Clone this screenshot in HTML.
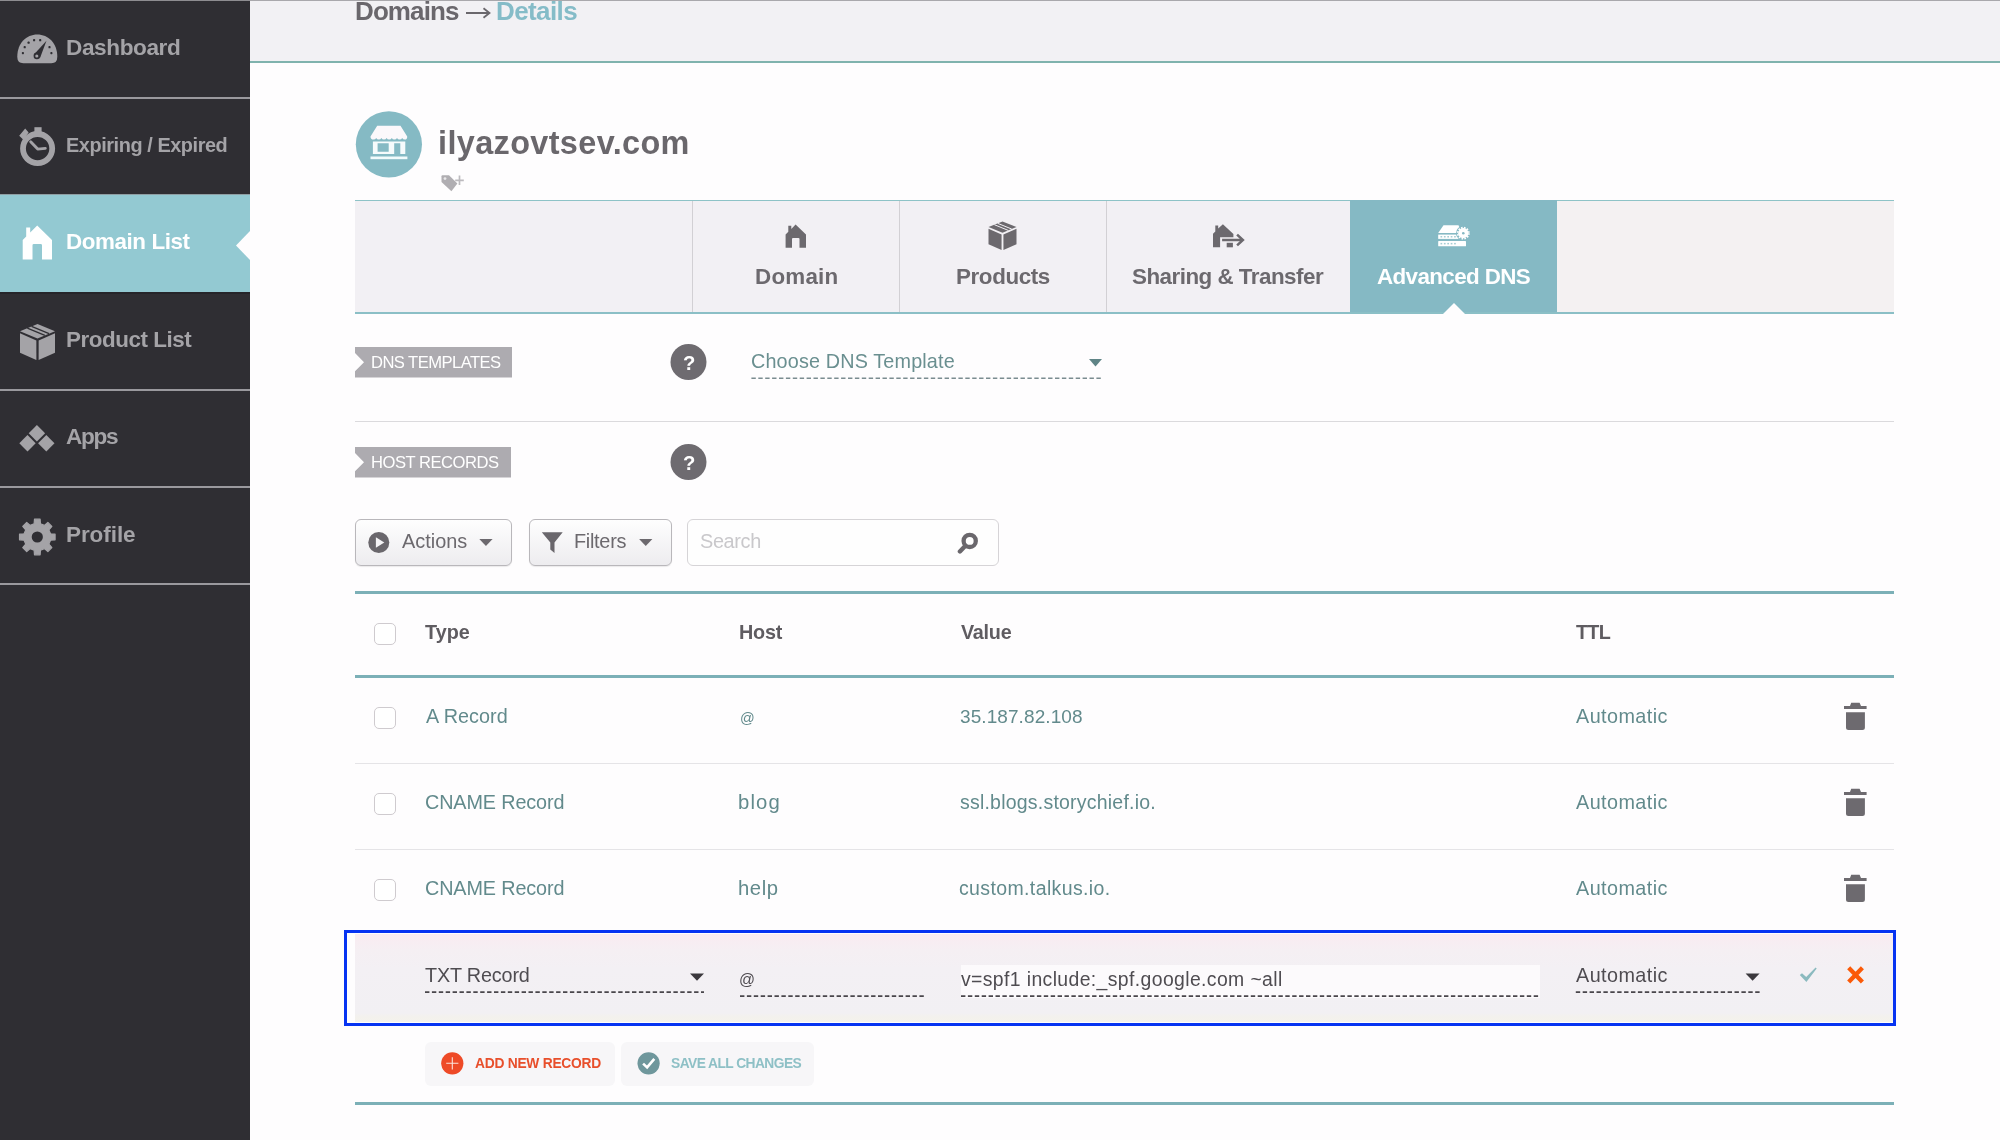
<!DOCTYPE html>
<html><head><meta charset="utf-8"><title>Advanced DNS</title>
<style>
html,body{margin:0;padding:0}
body{width:2000px;height:1140px;position:relative;overflow:hidden;background:#fefdfe;font-family:"Liberation Sans",sans-serif}
.t{position:absolute;white-space:nowrap;line-height:0;height:40px;font-family:"Liberation Sans",sans-serif;will-change:transform}
.t i{display:inline-block;width:0;height:40px}
.r{position:absolute;display:block}
.g{position:absolute;left:0;top:0;width:0;height:0}
</style></head><body>

<header class="g">
<div class="r" style="left:250px;top:0px;width:1750px;height:62px;background:#f2f1f4;"></div>
<div class="r" style="left:0px;top:0px;width:2000px;height:1.2px;background:#a9a8ac;"></div>
<div class="r" style="left:250px;top:61.2px;width:1750px;height:2.3px;background:#80b3ae;"></div>
<div class="t" style="left:354.71px;top:-19.60px;font-size:26px;color:#6a676c;font-weight:700;letter-spacing:-0.898px;"><i></i>Domains</div>
<div class="t" style="left:496.31px;top:-19.60px;font-size:26px;color:#85bcc8;font-weight:700;letter-spacing:-0.592px;"><i></i>Details</div>
<svg class="r" style="left:465px;top:6px" width="27" height="14" viewBox="0 0 27 14"><path d="M1 7H24M18.5 2.2L24.5 7L18.5 11.8" fill="none" stroke="#6a676c" stroke-width="1.8"/></svg>
</header><nav class="g">
<div class="r" style="left:0px;top:0px;width:250px;height:1140px;background:#2f2e33;"></div>
<div class="r" style="left:0px;top:0px;width:250px;height:1.2px;background:#8e8d91;"></div>
<div class="r" style="left:0px;top:97px;width:250px;height:1.6px;background:#9a999e;"></div>
<div class="r" style="left:0px;top:389px;width:250px;height:1.6px;background:#9a999e;"></div>
<div class="r" style="left:0px;top:486px;width:250px;height:1.6px;background:#9a999e;"></div>
<div class="r" style="left:0px;top:583px;width:250px;height:1.6px;background:#9a999e;"></div>
<div class="r" style="left:0px;top:194.7px;width:250px;height:97.8px;background:#93c9d2;"></div>
<div class="r" style="left:0px;top:194px;width:250px;height:1px;background:#8f9ea3;"></div>
<div class="r" style="left:0px;top:292px;width:250px;height:1.5px;background:#26252a;"></div>
<svg class="r" style="left:236px;top:231px" width="14" height="29" viewBox="0 0 14 29"><path d="M14 0L0 14.5L14 29Z" fill="#fefdfe"/></svg>
<div class="t" style="left:66.03px;top:15.30px;font-size:22.6px;color:#a4a3a7;font-weight:700;letter-spacing:-0.404px;"><i></i>Dashboard</div>
<div class="t" style="left:66.21px;top:112.30px;font-size:19.9px;color:#a4a3a7;font-weight:700;letter-spacing:-0.433px;"><i></i>Expiring / Expired</div>
<div class="t" style="left:66.04px;top:209.30px;font-size:22.4px;color:#ffffff;font-weight:700;letter-spacing:-0.415px;"><i></i>Domain List</div>
<div class="t" style="left:66.04px;top:307.00px;font-size:22.4px;color:#a4a3a7;font-weight:700;letter-spacing:-0.437px;"><i></i>Product List</div>
<div class="t" style="left:65.73px;top:404.40px;font-size:22.6px;color:#a4a3a7;font-weight:700;letter-spacing:-1.310px;"><i></i>Apps</div>
<div class="t" style="left:66.04px;top:501.50px;font-size:22.5px;color:#a4a3a7;font-weight:700;letter-spacing:-0.073px;"><i></i>Profile</div>
<svg class="r" style="left:17px;top:34px" width="41" height="30" viewBox="0 0 41 30"><g transform="translate(0.3 0.3)"><path d="M6 29Q0 29 0 22.5C0 9 9 0.3 20 0.3C31 0.3 40 9 40 22.5Q40 29 34 29Z" fill="#a4a3a7"/><rect x="4.55" y="17.65" width="2.1" height="2.3" rx="0.7" fill="#2f2e33"/><rect x="6.35" y="11.75" width="2.1" height="2.3" rx="0.7" fill="#2f2e33"/><rect x="10.25" y="7.25" width="2.1" height="2.3" rx="0.7" fill="#2f2e33"/><rect x="15.75" y="4.75" width="2.1" height="2.3" rx="0.7" fill="#2f2e33"/><rect x="21.85" y="4.75" width="2.1" height="2.3" rx="0.7" fill="#2f2e33"/><rect x="31.15" y="11.75" width="2.1" height="2.3" rx="0.7" fill="#2f2e33"/><rect x="33.05" y="17.65" width="2.1" height="2.3" rx="0.7" fill="#2f2e33"/><path d="M29.2 6.4L22.9 23.2L16.9 19.9Z" fill="#2f2e33"/><circle cx="19.6" cy="21.6" r="3.3" fill="#2f2e33"/><circle cx="19.5" cy="21.7" r="1.55" fill="#a4a3a7"/></g></svg>
<svg class="r" style="left:18px;top:126px" width="40" height="41" viewBox="0 0 40 41"><circle cx="19.6" cy="22.6" r="14.6" fill="none" stroke="#a4a3a7" stroke-width="5.8"/><rect x="16.4" y="1.2" width="7.2" height="5.5" fill="#a4a3a7"/><path d="M1.2 9.8L7.2 2.6L10.6 6.6L8.4 9.6L10.4 12L7.2 15.4Z" fill="#a4a3a7"/><path d="M12.7 15.8L19.7 23.1L27.3 22.4" fill="none" stroke="#a4a3a7" stroke-width="2.9" stroke-linecap="round" stroke-linejoin="round"/></svg>
<svg class="r" style="left:22px;top:225px" width="31" height="35" viewBox="0 0 31 35"><path d="M0.7 34.6V15L4.2 11.5V2.5H8.2V7.5L15.2 0.5L30 15V34.6H20V20.3Q20 19 18.7 19H11.8Q10.5 19 10.5 20.3V34.6Z" fill="#ffffff"/></svg>
<svg class="r" style="left:20px;top:324px" width="35" height="36" viewBox="0 0 35 36"><path d="M17.5 0L35 7.2L17.5 14.4L0 7.2Z" fill="#a4a3a7"/><path d="M0 9.36L16.345 16.560000000000002V36L0 28.8Z" fill="#a4a3a7"/><path d="M35 9.36L18.655 16.560000000000002V36L35 28.8Z" fill="#a4a3a7"/><path d="M7.35 4.176L24.849999999999998 11.376000000000001M11.55 2.4480000000000004L29.049999999999997 9.648000000000001" stroke="#2f2e33" stroke-width="1.26" fill="none"/></svg>
<svg class="r" style="left:19px;top:425px" width="36" height="27" viewBox="0 0 36 27"><path d="M17.9 0.0L26.099999999999998 8.2L17.9 16.4L9.7 8.2Z" fill="#a4a3a7"/><path d="M8.5 10.100000000000001L16.7 18.3L8.5 26.5L0.3000000000000007 18.3Z" fill="#a4a3a7"/><path d="M27.3 10.100000000000001L35.5 18.3L27.3 26.5L19.1 18.3Z" fill="#a4a3a7"/></svg>
<svg class="r" style="left:18px;top:518px" width="39" height="39" viewBox="0 0 39 39"><path d="M16.13 5.78L16.48 1.22L22.12 1.22L22.47 5.78L26.41 7.40L29.88 4.44L33.86 8.42L30.90 11.89L32.52 15.83L37.08 16.18L37.08 21.82L32.52 22.17L30.90 26.11L33.86 29.58L29.88 33.56L26.41 30.60L22.47 32.22L22.12 36.78L16.48 36.78L16.13 32.22L12.19 30.60L8.72 33.56L4.74 29.58L7.70 26.11L6.08 22.17L1.52 21.82L1.52 16.18L6.08 15.83L7.70 11.89L4.74 8.42L8.72 4.44L12.19 7.40Z" fill="#a4a3a7" stroke="#a4a3a7" stroke-width="1.2" stroke-linejoin="round"/><circle cx="19.3" cy="19" r="5.6" fill="#2f2e33"/></svg>
</nav><main class="g"><section class="g">
<svg class="r" style="left:355px;top:110px" width="68" height="68" viewBox="0 0 68 68"><g transform="translate(0.4 0.8)"><circle cx="33.5" cy="33.5" r="33.1" fill="#85bac4"/><path d="M21.8 14.9H45.1L51.8 25.6Q52 28.7 49.4 28.7Q47.6 28.7 46.8 27.2Q46 28.7 44.2 28.7Q42.4 28.7 41.6 27.2Q40.8 28.7 39 28.7Q37.2 28.7 36.4 27.2Q35.6 28.7 33.8 28.7Q32 28.7 31.2 27.2Q30.4 28.7 28.6 28.7Q26.8 28.7 26 27.2Q25.2 28.7 23.4 28.7Q21.6 28.7 20.8 27.2Q20 28.7 18.2 28.7Q15 28.7 15.1 25.6Z" fill="#fbf8fb"/><path d="M17.5 30.6H49.9V43.3H44.9V32.4H38.8V43.3H17.5ZM22.2 32.4V41H33.3V32.4Z" fill="#f6fbfc" fill-rule="evenodd"/><rect x="15.1" y="45.7" width="36.9" height="2.7" fill="#f2fbfc"/></g></svg>
<div class="t" style="left:438.33px;top:113.50px;font-size:32.4px;color:#6a676c;font-weight:700;letter-spacing:0.381px;"><i></i>ilyazovtsev.com</div>
<svg class="r" style="left:441px;top:174px" width="24" height="18" viewBox="0 0 24 18"><path d="M0.5 2.2Q0.5 1.3 1.4 1.3H8L16.4 9.4L10.4 17.2L0.5 8Z" fill="#b0aeb2"/><circle cx="4" cy="4.6" r="1.4" fill="#e9e8ea"/><path d="M14.2 6.4H22.8M18.5 1.6V11" stroke="#bcbabe" stroke-width="1.7"/></svg>
</section><section class="g">
<div class="r" style="left:355px;top:200px;width:1539px;height:113px;background:#f2f0f4;"></div>
<div class="r" style="left:1557px;top:200px;width:337px;height:113px;background:#f4f1f2;"></div>
<div class="r" style="left:355px;top:200px;width:1539px;height:1.3px;background:#8ec3c7;"></div>
<div class="r" style="left:692px;top:201px;width:1.3px;height:112px;background:#d2d0d4;"></div>
<div class="r" style="left:899px;top:201px;width:1.3px;height:112px;background:#d2d0d4;"></div>
<div class="r" style="left:1106px;top:201px;width:1.3px;height:112px;background:#d2d0d4;"></div>
<div class="r" style="left:1350.4px;top:200px;width:206.8px;height:113px;background:#85b9c4;"></div>
<div class="r" style="left:355px;top:312px;width:1539px;height:2.3px;background:#8bbfc6;"></div>
<svg class="r" style="left:1443px;top:303px" width="22" height="11" viewBox="0 0 22 11"><path d="M0 11L11 0L22 11Z" fill="#fefdfe"/></svg>
<div class="t" style="left:754.84px;top:244.10px;font-size:22.4px;color:#6c696e;font-weight:700;letter-spacing:0.221px;"><i></i>Domain</div>
<div class="t" style="left:956.24px;top:244.10px;font-size:22.4px;color:#6c696e;font-weight:700;letter-spacing:-0.393px;"><i></i>Products</div>
<div class="t" style="left:1132.23px;top:244.10px;font-size:22.4px;color:#6c696e;font-weight:700;letter-spacing:-0.510px;"><i></i>Sharing &amp; Transfer</div>
<div class="t" style="left:1376.64px;top:244.10px;font-size:22.4px;color:#ffffff;font-weight:700;letter-spacing:-0.614px;"><i></i>Advanced DNS</div>
<svg class="r" style="left:785px;top:224px" width="22" height="24" viewBox="0 0 22 24"><path d="M0.6 23.8V10.5L3.3 7.8V1.8H6.3V5L10.6 0.4L21 10.5V23.8H14.5V15Q14.5 14 13.5 14H8Q7 14 7 15V23.8Z" fill="#6c696e"/></svg>
<svg class="r" style="left:988px;top:221px" width="29" height="29" viewBox="0 0 29 29"><g transform="translate(0.5 0.4)"><path d="M14.0 0L28 5.720000000000001L14.0 11.440000000000001L0 5.720000000000001Z" fill="#6c696e"/><path d="M0 7.436000000000001L13.076 13.156V28.6L0 22.880000000000003Z" fill="#6c696e"/><path d="M28 7.436000000000001L14.924 13.156V28.6L28 22.880000000000003Z" fill="#6c696e"/><path d="M5.88 3.3176L19.88 9.037600000000001M9.24 1.9448000000000003L23.24 7.664800000000001" stroke="#f2f0f4" stroke-width="1.00" fill="none"/></g></svg>
<svg class="r" style="left:1212px;top:224px" width="33" height="24" viewBox="0 0 33 24"><g transform="translate(0.5 0)"><path d="M0.5 23.3V9.8L2.8 7.4V1.4H5.7V4.6L10.4 0.2L20.9 10V13.2H7.6V23.3Z" fill="#6c696e"/><rect x="14.2" y="18.8" width="6.2" height="4.5" fill="#6c696e"/><path d="M9.6 16H29.5" stroke="#6c696e" stroke-width="2.5"/><path d="M24.6 10.6L30.4 16L24.6 21.4" fill="none" stroke="#6c696e" stroke-width="2.5"/></g></svg>
<svg class="r" style="left:1437px;top:225px" width="34" height="22" viewBox="0 0 34 22"><g transform="translate(0.5 0)"><path d="M6 0.3H21L24.5 7.9H0.7Z" fill="#ffffff"/><rect x="0.7" y="9.6" width="25" height="4.3" fill="#ffffff"/><rect x="0.7" y="16" width="27.8" height="5.3" rx="0.6" fill="#ffffff"/><circle cx="25.8" cy="8.2" r="7.3" fill="#85b9c4"/><circle cx="25.8" cy="8.2" r="5.1" fill="#ffffff"/><circle cx="25.8" cy="8.2" r="5.6" fill="none" stroke="#ffffff" stroke-width="1.6" stroke-dasharray="1.6 1.33"/><circle cx="25.8" cy="8.2" r="1.3" fill="#85b9c4"/><rect x="3.0" y="11" width="1.7" height="1.5" fill="#a6cdd4"/><rect x="6.4" y="11" width="1.7" height="1.5" fill="#a6cdd4"/><rect x="9.8" y="11" width="1.7" height="1.5" fill="#a6cdd4"/><rect x="13.2" y="11" width="1.7" height="1.5" fill="#a6cdd4"/><rect x="16.6" y="11" width="1.7" height="1.5" fill="#a6cdd4"/><rect x="3.0" y="17.9" width="1.7" height="1.5" fill="#a6cdd4"/><rect x="6.4" y="17.9" width="1.7" height="1.5" fill="#a6cdd4"/><rect x="9.8" y="17.9" width="1.7" height="1.5" fill="#a6cdd4"/><rect x="13.2" y="17.9" width="1.7" height="1.5" fill="#a6cdd4"/><rect x="16.6" y="17.9" width="1.7" height="1.5" fill="#a6cdd4"/></g></svg>
</section><section class="g">
<svg class="r" style="left:355px;top:347px" width="157" height="31" viewBox="0 0 157 31"><path d="M0 0H157V30.4H0V24.3L9 15.2L0 6.1Z" fill="#adabb0"/></svg>
<div class="t" style="left:371.27px;top:327.60px;font-size:16.6px;color:#ffffff;letter-spacing:-0.559px;"><i></i>DNS TEMPLATES</div>
<svg class="r" style="left:355px;top:447px" width="156" height="31" viewBox="0 0 156 31"><path d="M0 0H156V30.4H0V24.3L9 15.2L0 6.1Z" fill="#adabb0"/></svg>
<div class="t" style="left:371.27px;top:427.60px;font-size:16.6px;color:#ffffff;letter-spacing:-0.482px;"><i></i>HOST RECORDS</div>
<svg class="r" style="left:670px;top:344px" width="37" height="36" viewBox="0 0 37 36"><g transform="translate(0.5 0)"><circle cx="18" cy="18" r="18" fill="#6e6b70"/></g></svg>
<div class="t" style="left:683.39px;top:329.60px;font-size:20.2px;color:#ffffff;font-weight:700;"><i></i>?</div>
<svg class="r" style="left:670px;top:444px" width="37" height="36" viewBox="0 0 37 36"><g transform="translate(0.5 0)"><circle cx="18" cy="18" r="18" fill="#6e6b70"/></g></svg>
<div class="t" style="left:683.39px;top:429.60px;font-size:20.2px;color:#ffffff;font-weight:700;"><i></i>?</div>
<div class="t" style="left:750.61px;top:327.60px;font-size:19.8px;color:#6a8f90;letter-spacing:0.156px;"><i></i>Choose DNS Template</div>
<svg class="r" style="left:751px;top:376px" width="352" height="5" viewBox="0 0 352 5"><g transform="translate(0.4 0.3)"><path d="M0 2H351.6" stroke="#7a8c90" stroke-width="1.6" stroke-dasharray="4.4 2.5"/></g></svg>
<svg class="r" style="left:1089px;top:359px" width="13" height="8" viewBox="0 0 13 8"><path d="M0 0H13L6.5 7.4Z" fill="#5f8486"/></svg>
<div class="r" style="left:355px;top:421px;width:1539px;height:1.2px;background:#dbdadd;"></div>
</section><section class="g">
<div class="r" style="left:355px;top:519.2px;width:157px;height:47px;background:linear-gradient(#fefefe,#edecef);border:1.6px solid #b9b7bb;border-radius:6px;box-sizing:border-box;box-shadow:0 1px 1px rgba(0,0,0,.08);"></div>
<div class="r" style="left:529px;top:519.2px;width:142.5px;height:47px;background:linear-gradient(#fefefe,#edecef);border:1.6px solid #b9b7bb;border-radius:6px;box-sizing:border-box;box-shadow:0 1px 1px rgba(0,0,0,.08);"></div>
<div class="r" style="left:687px;top:519.2px;width:311.5px;height:47px;background:#fefefe;border:1.6px solid #d6d4d7;border-radius:6px;box-sizing:border-box;"></div>
<svg class="r" style="left:368px;top:532px" width="22" height="21" viewBox="0 0 22 21"><g transform="translate(0.3 0)"><circle cx="10.5" cy="10.5" r="10.5" fill="#6a676c"/><path d="M7.6 5.3L16 10.5L7.6 15.7Z" fill="#f5f4f6"/></g></svg>
<div class="t" style="left:402.00px;top:508.40px;font-size:19.9px;color:#6c696e;letter-spacing:0.004px;"><i></i>Actions</div>
<svg class="r" style="left:479px;top:539px" width="14" height="7" viewBox="0 0 14 7"><g transform="translate(0.3 0)"><path d="M0 0H13.3L6.65 7Z" fill="#6c696e"/></g></svg>
<svg class="r" style="left:541px;top:532px" width="22" height="22" viewBox="0 0 22 22"><g transform="translate(0.5 0)"><path d="M0.3 0.3H21.2L13 10.5V21L8.8 17.5V10.5Z" fill="#6a676c"/></g></svg>
<div class="t" style="left:573.81px;top:508.40px;font-size:19.9px;color:#6c696e;letter-spacing:-0.290px;"><i></i>Filters</div>
<svg class="r" style="left:639px;top:539px" width="14" height="7" viewBox="0 0 14 7"><g transform="translate(0.1 0)"><path d="M0 0H13.3L6.65 7Z" fill="#6c696e"/></g></svg>
<div class="t" style="left:699.60px;top:508.40px;font-size:19.9px;color:#c9c8cb;letter-spacing:-0.359px;"><i></i>Search</div>
<svg class="r" style="left:957px;top:531px" width="22" height="23" viewBox="0 0 22 23"><g transform="translate(0 0.5)"><circle cx="12.7" cy="9.4" r="6.1" fill="none" stroke="#6a676c" stroke-width="4.3"/><path d="M8.4 14.2L2.9 20" stroke="#6a676c" stroke-width="4.4" stroke-linecap="round"/></g></svg>
</section><section class="g">
<div class="r" style="left:355px;top:591.3px;width:1539px;height:2.8px;background:#7cb0b7;"></div>
<div class="r" style="left:355px;top:674.8px;width:1539px;height:2.9px;background:#7cb0b7;"></div>
<div class="t" style="left:425.20px;top:598.60px;font-size:19.8px;color:#5f5c61;font-weight:700;letter-spacing:0.015px;"><i></i>Type</div>
<div class="t" style="left:739.31px;top:598.60px;font-size:19.8px;color:#5f5c61;font-weight:700;letter-spacing:-0.224px;"><i></i>Host</div>
<div class="t" style="left:960.90px;top:598.60px;font-size:19.8px;color:#5f5c61;font-weight:700;letter-spacing:-0.246px;"><i></i>Value</div>
<div class="t" style="left:1575.60px;top:598.60px;font-size:19.8px;color:#5f5c61;font-weight:700;letter-spacing:-0.721px;"><i></i>TTL</div>
<div class="r" style="left:374px;top:623.4px;width:21.5px;height:22px;background:#ffffff;border:1.5px solid #cfcbcf;border-radius:5px;box-sizing:border-box;"></div>
<div class="r" style="left:374px;top:706.8px;width:21.5px;height:22px;background:#ffffff;border:1.5px solid #cfcbcf;border-radius:5px;box-sizing:border-box;"></div>
<div class="t" style="left:425.50px;top:683.00px;font-size:19.8px;color:#628a8c;letter-spacing:0.044px;"><i></i>A Record</div>
<div class="t" style="left:739.51px;top:683.40px;font-size:14.5px;color:#628a8c;"><i></i>@</div>
<div class="t" style="left:960.24px;top:683.00px;font-size:19px;color:#628a8c;letter-spacing:0.085px;"><i></i>35.187.82.108</div>
<div class="t" style="left:1575.80px;top:683.00px;font-size:19.8px;color:#628a8c;letter-spacing:0.435px;"><i></i>Automatic</div>
<svg class="r" style="left:1844px;top:702px" width="23" height="29" viewBox="0 0 23 29"><g transform="translate(0 0.5)"><path d="M7.2 0.2H15.6L17 3.6H22.6V6.5H0V3.6H6ZM2 9.7H20.9V25Q20.9 27.5 18.4 27.5H4.5Q2 27.5 2 25Z" fill="#6d6a6f"/></g></svg>
<div class="r" style="left:374px;top:792.8px;width:21.5px;height:22px;background:#ffffff;border:1.5px solid #cfcbcf;border-radius:5px;box-sizing:border-box;"></div>
<div class="t" style="left:424.51px;top:769.00px;font-size:19.8px;color:#628a8c;letter-spacing:-0.118px;"><i></i>CNAME Record</div>
<div class="t" style="left:738.28px;top:769.00px;font-size:20.3px;color:#628a8c;letter-spacing:1.123px;"><i></i>blog</div>
<div class="t" style="left:959.51px;top:769.00px;font-size:19.5px;color:#628a8c;letter-spacing:0.215px;"><i></i>ssl.blogs.storychief.io.</div>
<div class="t" style="left:1575.80px;top:769.00px;font-size:19.8px;color:#628a8c;letter-spacing:0.435px;"><i></i>Automatic</div>
<svg class="r" style="left:1844px;top:788px" width="23" height="29" viewBox="0 0 23 29"><g transform="translate(0 0.5)"><path d="M7.2 0.2H15.6L17 3.6H22.6V6.5H0V3.6H6ZM2 9.7H20.9V25Q20.9 27.5 18.4 27.5H4.5Q2 27.5 2 25Z" fill="#6d6a6f"/></g></svg>
<div class="r" style="left:374px;top:878.8px;width:21.5px;height:22px;background:#ffffff;border:1.5px solid #cfcbcf;border-radius:5px;box-sizing:border-box;"></div>
<div class="t" style="left:424.51px;top:855.00px;font-size:19.8px;color:#628a8c;letter-spacing:-0.118px;"><i></i>CNAME Record</div>
<div class="t" style="left:738.18px;top:855.00px;font-size:20.3px;color:#628a8c;letter-spacing:0.555px;"><i></i>help</div>
<div class="t" style="left:959.22px;top:855.00px;font-size:19.5px;color:#628a8c;letter-spacing:0.372px;"><i></i>custom.talkus.io.</div>
<div class="t" style="left:1575.80px;top:855.00px;font-size:19.8px;color:#628a8c;letter-spacing:0.435px;"><i></i>Automatic</div>
<svg class="r" style="left:1844px;top:874px" width="23" height="29" viewBox="0 0 23 29"><g transform="translate(0 0.5)"><path d="M7.2 0.2H15.6L17 3.6H22.6V6.5H0V3.6H6ZM2 9.7H20.9V25Q20.9 27.5 18.4 27.5H4.5Q2 27.5 2 25Z" fill="#6d6a6f"/></g></svg>
<div class="r" style="left:355px;top:762.5px;width:1539px;height:1.2px;background:#e5e4e7;"></div>
<div class="r" style="left:355px;top:848.5px;width:1539px;height:1.2px;background:#e5e4e7;"></div>
</section><section class="g">
<div class="r" style="left:344.3px;top:929.7px;width:1551.8px;height:96.1px;background:#fefdfe;border:3.4px solid #0633f2;box-sizing:border-box;"></div>
<div class="r" style="left:355px;top:934.2px;width:1537.8px;height:88.2px;background:linear-gradient(#f9ebf1 0%,#f5eff3 18%,#f3f0f4 40%,#f2f0f3 90%,#f3f1ed 94%,#f4f2ec 100%);"></div>
<div class="r" style="left:961px;top:965px;width:579px;height:33px;background:#fcfafc;"></div>
<div class="t" style="left:424.60px;top:942.30px;font-size:19.8px;color:#4f4c51;letter-spacing:-0.160px;"><i></i>TXT Record</div>
<svg class="r" style="left:425px;top:990px" width="279" height="5" viewBox="0 0 279 5"><g transform="translate(0 0.1)"><path d="M0 2H279" stroke="#49464b" stroke-width="1.8" stroke-dasharray="4.4 2.5"/></g></svg>
<svg class="r" style="left:690px;top:973px" width="14" height="8" viewBox="0 0 14 8"><g transform="translate(0 0.5)"><path d="M0 0H14L7.0 7.2Z" fill="#3b383d"/></g></svg>
<div class="t" style="left:739.02px;top:945.00px;font-size:15.8px;color:#4f4c51;"><i></i>@</div>
<svg class="r" style="left:740px;top:994px" width="185" height="5" viewBox="0 0 185 5"><g transform="translate(0 0.1)"><path d="M0 2H185" stroke="#49464b" stroke-width="1.8" stroke-dasharray="4.4 2.5"/></g></svg>
<div class="t" style="left:960.90px;top:946.30px;font-size:19.4px;color:#4f4c51;letter-spacing:0.382px;"><i></i>v=spf1 include:_spf.google.com ~all</div>
<svg class="r" style="left:961px;top:994px" width="579" height="5" viewBox="0 0 579 5"><g transform="translate(0 0.1)"><path d="M0 2H579" stroke="#49464b" stroke-width="1.8" stroke-dasharray="4.4 2.5"/></g></svg>
<div class="t" style="left:1575.80px;top:942.30px;font-size:19.8px;color:#4f4c51;letter-spacing:0.435px;"><i></i>Automatic</div>
<svg class="r" style="left:1575px;top:990px" width="185" height="5" viewBox="0 0 185 5"><g transform="translate(0.8 0.1)"><path d="M0 2H184" stroke="#49464b" stroke-width="1.8" stroke-dasharray="4.4 2.5"/></g></svg>
<svg class="r" style="left:1745px;top:973px" width="15" height="8" viewBox="0 0 15 8"><g transform="translate(0.6 0.5)"><path d="M0 0H14L7.0 7.2Z" fill="#3b383d"/></g></svg>
<svg class="r" style="left:1799px;top:966px" width="19" height="18" viewBox="0 0 19 18"><g transform="translate(0 0.5)"><path d="M0.8 8.6L3 6.8L7.2 10.6L16.6 1.1L17.7 1.9L7.4 15.6Z" fill="#8bbabf"/></g></svg>
<svg class="r" style="left:1846px;top:965px" width="19" height="20" viewBox="0 0 19 20"><g transform="translate(0 0.5)"><path d="M2.7 2.2L16.4 16.4M16.4 2.2L2.7 16.4" fill="none" stroke="#fb5a08" stroke-width="4.3"/></g></svg>
</section><section class="g">
<div class="r" style="left:425px;top:1041.5px;width:189.5px;height:44px;background:#f7f6f8;border-radius:6px;"></div>
<div class="r" style="left:621px;top:1041.5px;width:193px;height:44px;background:#f7f6f8;border-radius:6px;"></div>
<svg class="r" style="left:441px;top:1052px" width="23" height="23" viewBox="0 0 23 23"><g transform="translate(0.2 0.2)"><circle cx="11.1" cy="11.1" r="11.1" fill="#ee4a27"/><path d="M5 11.1H17.2M11.1 5V17.2" stroke="#fbe3dc" stroke-width="1.1"/></g></svg>
<div class="t" style="left:475.15px;top:1028.20px;font-size:13.8px;color:#e84f2b;font-weight:700;letter-spacing:-0.255px;"><i></i>ADD NEW RECORD</div>
<svg class="r" style="left:637px;top:1052px" width="23" height="23" viewBox="0 0 23 23"><g transform="translate(0.5 0.2)"><circle cx="11.1" cy="11.1" r="11.1" fill="#6f979c"/><path d="M5.6 11.4L9.6 15.2L16.8 6.6" fill="none" stroke="#ffffff" stroke-width="2.6"/></g></svg>
<div class="t" style="left:670.79px;top:1028.20px;font-size:13.8px;color:#8ec0c6;font-weight:700;letter-spacing:-0.570px;"><i></i>SAVE ALL CHANGES</div>
<div class="r" style="left:355px;top:1102.3px;width:1539px;height:2.9px;background:#7cb0b7;"></div>
</section></main>
</body></html>
